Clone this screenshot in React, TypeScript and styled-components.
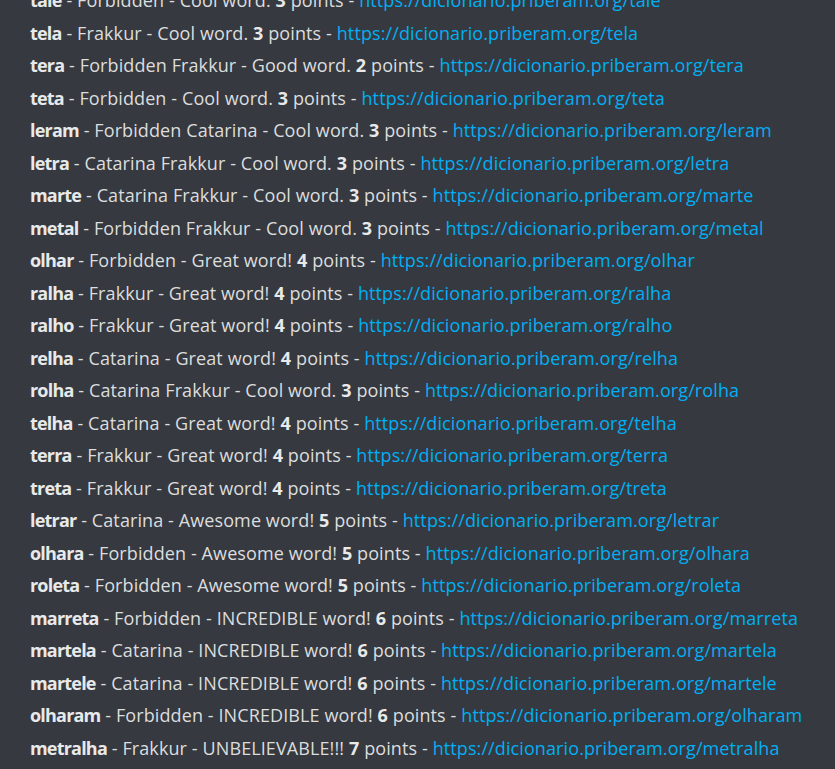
import React from "react";
import styled, { createGlobalStyle } from "styled-components";

const GlobalStyle = createGlobalStyle`
  html, body {
    margin: 0;
    padding: 0;
    background: #36393f;
    overflow: hidden;
  }
  body {
    font-family: "Open Sans", "Noto Sans", sans-serif;
  }
`;

const Page = styled.div`
  width: 835px;
  height: 769px;
  background: #36393f;
  overflow: hidden;
`;

const List = styled.div`
  display: flex;
  flex-direction: column;
  margin-top: -16px;
  padding-left: 30px;
`;

const Line = styled.div`
  color: #dcddde;
  font-size: 18px;
  line-height: 32.5px;
  letter-spacing: 0.1px;
  white-space: nowrap;
`;

const Word = styled.strong`
  font-weight: 700;
  color: #e8e9ea;
  letter-spacing: -0.8px;
`;

const Num = styled.strong`
  font-weight: 700;
  color: #e8e9ea;
`;

const Link = styled.a`
  color: #00aff4;
  text-decoration: none;
`;

type Row = [string, string, string, number];

const rows: Row[] = [
  ["tale", "Forbidden", "Cool word.", 3],
  ["tela", "Frakkur", "Cool word.", 3],
  ["tera", "Forbidden Frakkur", "Good word.", 2],
  ["teta", "Forbidden", "Cool word.", 3],
  ["leram", "Forbidden Catarina", "Cool word.", 3],
  ["letra", "Catarina Frakkur", "Cool word.", 3],
  ["marte", "Catarina Frakkur", "Cool word.", 3],
  ["metal", "Forbidden Frakkur", "Cool word.", 3],
  ["olhar", "Forbidden", "Great word!", 4],
  ["ralha", "Frakkur", "Great word!", 4],
  ["ralho", "Frakkur", "Great word!", 4],
  ["relha", "Catarina", "Great word!", 4],
  ["rolha", "Catarina Frakkur", "Cool word.", 3],
  ["telha", "Catarina", "Great word!", 4],
  ["terra", "Frakkur", "Great word!", 4],
  ["treta", "Frakkur", "Great word!", 4],
  ["letrar", "Catarina", "Awesome word!", 5],
  ["olhara", "Forbidden", "Awesome word!", 5],
  ["roleta", "Forbidden", "Awesome word!", 5],
  ["marreta", "Forbidden", "INCREDIBLE word!", 6],
  ["martela", "Catarina", "INCREDIBLE word!", 6],
  ["martele", "Catarina", "INCREDIBLE word!", 6],
  ["olharam", "Forbidden", "INCREDIBLE word!", 6],
  ["metralha", "Frakkur", "UNBELIEVABLE!!!", 7],
];

export default function App() {
  return (
    <Page>
      <GlobalStyle />
      <List>
        {rows.map(([w, src, label, pts]) => {
          const url = `https://dicionario.priberam.org/${w}`;
          return (
            <Line key={w}>
              <Word>{w}</Word> - {src} - {label} <Num>{pts}</Num> points -{" "}
              <Link href={url}>{url}</Link>
            </Line>
          );
        })}
      </List>
    </Page>
  );
}
